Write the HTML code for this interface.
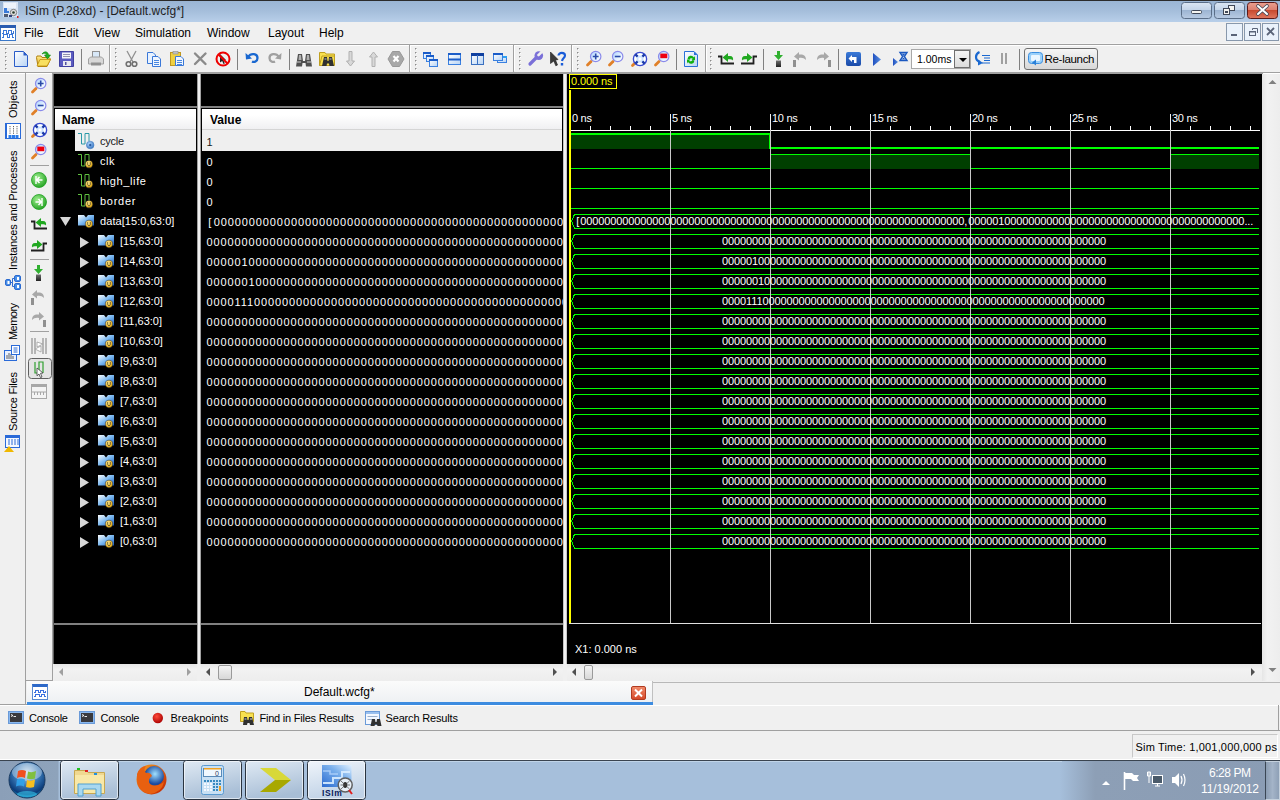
<!DOCTYPE html><html><head><meta charset="utf-8"><style>
html,body{margin:0;padding:0;width:1280px;height:800px;overflow:hidden;background:#f0f0f0;}
body{position:relative;font-family:"Liberation Sans",sans-serif;font-size:12px;color:#000;}
div{box-sizing:border-box;}
.t{position:absolute;white-space:nowrap;line-height:14px;}
svg{position:absolute;overflow:visible;}
</style></head><body>
<div style="position:absolute;left:0px;top:0px;width:1280px;height:22px;background:linear-gradient(#99b4d3,#a5bedb 50%,#b8cfe9);"></div>
<div style="position:absolute;left:0px;top:0px;width:1280px;height:1px;background:#2b2b2b;"></div>
<div class="t" style="left:25px;top:4px;font-size:12px;color:#1e1e1e;">ISim (P.28xd) - [Default.wcfg*]</div>
<svg width="1" height="1" style="left:0;top:0;"><rect x="3" y="2" width="15" height="15" fill="#d8e4f4"/><rect x="4" y="3" width="12" height="5" fill="#eef4fc"/><path d="M4 8 H7 V11 H9 V13 H4 Z" fill="#3a7ad8"/><circle cx="13.5" cy="12.5" r="3.2" fill="#e0e0e0" stroke="#808080" stroke-width="1"/><circle cx="13.5" cy="12.5" r="1.3" fill="#2a3a2a"/><rect x="4" y="14" width="4" height="3" fill="#505a70"/><rect x="9" y="15" width="3" height="2" fill="#30407a"/><rect x="17" y="16" width="1.5" height="2" fill="#e02020"/></svg>
<svg width="1" height="1" style="left:0;top:0;"><defs><linearGradient id="gWB" x1="0" y1="0" x2="0" y2="1"><stop offset="0" stop-color="#dbe6f3"/><stop offset="0.45" stop-color="#c4d5e9"/><stop offset="0.5" stop-color="#9db5d3"/><stop offset="1" stop-color="#b8cbe3"/></linearGradient><linearGradient id="gWC" x1="0" y1="0" x2="0" y2="1"><stop offset="0" stop-color="#eaa090"/><stop offset="0.45" stop-color="#dc8070"/><stop offset="0.5" stop-color="#c84a30"/><stop offset="1" stop-color="#e07860"/></linearGradient></defs><rect x="1181.5" y="2.5" width="30" height="16" rx="3" fill="url(#gWB)" stroke="#5a6e88"/><rect x="1214.5" y="2.5" width="30" height="16" rx="3" fill="url(#gWB)" stroke="#5a6e88"/><rect x="1247.5" y="2.5" width="30" height="16" rx="3" fill="url(#gWC)" stroke="#5a1a1a"/><rect x="1191.5" y="10.5" width="10" height="3" rx="1" fill="#f4f4f0" stroke="#404858"/><rect x="1228.5" y="5.5" width="6" height="5" fill="#f4f4f0" stroke="#404858"/><rect x="1223.5" y="8.5" width="6" height="6" fill="#f4f4f0" stroke="#404858"/><rect x="1225" y="11" width="3" height="2" fill="#404858"/><path d="M1258 6 L1267 14 M1267 6 L1258 14" stroke="#404858" stroke-width="3.6" stroke-linecap="round"/><path d="M1258 6 L1267 14 M1267 6 L1258 14" stroke="#ffffff" stroke-width="2" stroke-linecap="round"/></svg>
<div style="position:absolute;left:0px;top:22px;width:1280px;height:22px;background:#f0f0f0;"></div>
<div class="t" style="left:24px;top:26px;font-size:12px;">File</div>
<div class="t" style="left:58px;top:26px;font-size:12px;">Edit</div>
<div class="t" style="left:94px;top:26px;font-size:12px;">View</div>
<div class="t" style="left:135px;top:26px;font-size:12px;">Simulation</div>
<div class="t" style="left:207px;top:26px;font-size:12px;">Window</div>
<div class="t" style="left:268px;top:26px;font-size:12px;">Layout</div>
<div class="t" style="left:319px;top:26px;font-size:12px;">Help</div>
<div style="position:absolute;left:0px;top:43px;width:1280px;height:1px;background:#f5f5f5;"></div>
<svg width="1" height="1" style="left:0;top:0;"><rect x="0.5" y="25.5" width="15" height="15" fill="#fff" stroke="#3a78c8"/><rect x="0" y="25" width="16" height="3" fill="#2a5cb0"/><path d="M2 33.5 H3.5 V30.5 H6.5 V33.5 H8.5 V30.5 H11.5 V33.5 H13.5 V30.5 M2 37.5 H3.5 V34.5 H7.5 V37.5 H9.5 V34.5 H12.5 V37.5 H14" stroke="#3a78d8" fill="none" shape-rendering="crispEdges"/><rect x="1226.5" y="23.5" width="16" height="17" fill="#eaf2fb" stroke="#8898ac"/><rect x="1244.5" y="23.5" width="16" height="17" fill="#eaf2fb" stroke="#8898ac"/><rect x="1262.5" y="23.5" width="16" height="17" fill="#eaf2fb" stroke="#8898ac"/><rect x="1231" y="34" width="6" height="2" fill="#5a6478"/><rect x="1249.5" y="31.5" width="6" height="4" fill="none" stroke="#5a6478" stroke-width="1"/><rect x="1249" y="31" width="7" height="1.5" fill="#5a6478"/><path d="M1252.5 30 V28.5 H1257.5 V33" stroke="#5a6478" fill="none"/><path d="M1267 28 L1274 35 M1274 28 L1267 35" stroke="#5a6478" stroke-width="1.8"/></svg>
<div style="position:absolute;left:0px;top:44px;width:1280px;height:1px;background:#a0a0a0;"></div>
<div style="position:absolute;left:0px;top:45px;width:1280px;height:1px;background:#ffffff;"></div>
<div style="position:absolute;left:0px;top:46px;width:1280px;height:26px;background:#f0f0f0;"></div>
<div style="position:absolute;left:0px;top:72px;width:1280px;height:1px;background:#a0a0a0;"></div>
<div style="position:absolute;left:0px;top:73px;width:1280px;height:1px;background:#ffffff;"></div>
<div style="position:absolute;left:53px;top:73px;width:1210px;height:1px;background:#a0a0a0;"></div>
<svg width="1280" height="80" style="left:0;top:0;"><defs>
<linearGradient id="gPage" x1="0" y1="0" x2="1" y2="1"><stop offset="0" stop-color="#ffffff"/><stop offset="1" stop-color="#b8d4f4"/></linearGradient>
<linearGradient id="gFold" x1="0" y1="0" x2="0" y2="1"><stop offset="0" stop-color="#ffe98a"/><stop offset="1" stop-color="#e0b020"/></linearGradient>
<linearGradient id="gLens" x1="0" y1="0" x2="1" y2="1"><stop offset="0" stop-color="#a8d0ff"/><stop offset="0.6" stop-color="#e8f4ff"/><stop offset="1" stop-color="#ffffff"/></linearGradient>
<linearGradient id="gGray" x1="0" y1="0" x2="0" y2="1"><stop offset="0" stop-color="#e8e8e8"/><stop offset="1" stop-color="#a8a8a8"/></linearGradient>
<linearGradient id="gBlueBox" x1="0" y1="0" x2="0" y2="1"><stop offset="0" stop-color="#3a7ad8"/><stop offset="1" stop-color="#1a4aa8"/></linearGradient>
<linearGradient id="gPlay" x1="0" y1="0" x2="1" y2="0"><stop offset="0" stop-color="#2050c0"/><stop offset="1" stop-color="#5a90e0"/></linearGradient>
<linearGradient id="gBar" x1="0" y1="0" x2="0" y2="1"><stop offset="0" stop-color="#707070"/><stop offset="1" stop-color="#202020"/></linearGradient>
<linearGradient id="gBus" x1="0" y1="0" x2="1" y2="1"><stop offset="0" stop-color="#ffffff"/><stop offset="0.5" stop-color="#7ab8f0"/><stop offset="1" stop-color="#1a60c0"/></linearGradient>
<radialGradient id="gCoin" cx="0.4" cy="0.35" r="0.7"><stop offset="0" stop-color="#fff2a0"/><stop offset="1" stop-color="#d89a00"/></radialGradient>
<radialGradient id="gGreenC" cx="0.4" cy="0.35" r="0.7"><stop offset="0" stop-color="#a0f090"/><stop offset="1" stop-color="#20a020"/></radialGradient>
<radialGradient id="gBlueC" cx="0.4" cy="0.35" r="0.7"><stop offset="0" stop-color="#b0d8ff"/><stop offset="1" stop-color="#3070c0"/></radialGradient>
</defs><rect x="109" y="44" width="1" height="28" fill="#a0a0a0"/><rect x="110" y="45" width="1" height="26" fill="#ffffff"/><rect x="409" y="44" width="1" height="28" fill="#a0a0a0"/><rect x="410" y="45" width="1" height="26" fill="#ffffff"/><rect x="513" y="44" width="1" height="28" fill="#a0a0a0"/><rect x="514" y="45" width="1" height="26" fill="#ffffff"/><rect x="571" y="44" width="1" height="28" fill="#a0a0a0"/><rect x="572" y="45" width="1" height="26" fill="#ffffff"/><rect x="705" y="44" width="1" height="28" fill="#a0a0a0"/><rect x="706" y="45" width="1" height="26" fill="#ffffff"/><rect x="5" y="48" width="2" height="2" fill="#c4c4c4"/><rect x="5" y="48" width="1" height="1" fill="#8a8a8a"/><rect x="6" y="49" width="1" height="1" fill="#ffffff"/><rect x="5" y="52" width="2" height="2" fill="#c4c4c4"/><rect x="5" y="52" width="1" height="1" fill="#8a8a8a"/><rect x="6" y="53" width="1" height="1" fill="#ffffff"/><rect x="5" y="56" width="2" height="2" fill="#c4c4c4"/><rect x="5" y="56" width="1" height="1" fill="#8a8a8a"/><rect x="6" y="57" width="1" height="1" fill="#ffffff"/><rect x="5" y="60" width="2" height="2" fill="#c4c4c4"/><rect x="5" y="60" width="1" height="1" fill="#8a8a8a"/><rect x="6" y="61" width="1" height="1" fill="#ffffff"/><rect x="5" y="64" width="2" height="2" fill="#c4c4c4"/><rect x="5" y="64" width="1" height="1" fill="#8a8a8a"/><rect x="6" y="65" width="1" height="1" fill="#ffffff"/><rect x="5" y="68" width="2" height="2" fill="#c4c4c4"/><rect x="5" y="68" width="1" height="1" fill="#8a8a8a"/><rect x="6" y="69" width="1" height="1" fill="#ffffff"/><rect x="115" y="48" width="2" height="2" fill="#c4c4c4"/><rect x="115" y="48" width="1" height="1" fill="#8a8a8a"/><rect x="116" y="49" width="1" height="1" fill="#ffffff"/><rect x="115" y="52" width="2" height="2" fill="#c4c4c4"/><rect x="115" y="52" width="1" height="1" fill="#8a8a8a"/><rect x="116" y="53" width="1" height="1" fill="#ffffff"/><rect x="115" y="56" width="2" height="2" fill="#c4c4c4"/><rect x="115" y="56" width="1" height="1" fill="#8a8a8a"/><rect x="116" y="57" width="1" height="1" fill="#ffffff"/><rect x="115" y="60" width="2" height="2" fill="#c4c4c4"/><rect x="115" y="60" width="1" height="1" fill="#8a8a8a"/><rect x="116" y="61" width="1" height="1" fill="#ffffff"/><rect x="115" y="64" width="2" height="2" fill="#c4c4c4"/><rect x="115" y="64" width="1" height="1" fill="#8a8a8a"/><rect x="116" y="65" width="1" height="1" fill="#ffffff"/><rect x="115" y="68" width="2" height="2" fill="#c4c4c4"/><rect x="115" y="68" width="1" height="1" fill="#8a8a8a"/><rect x="116" y="69" width="1" height="1" fill="#ffffff"/><rect x="415" y="48" width="2" height="2" fill="#c4c4c4"/><rect x="415" y="48" width="1" height="1" fill="#8a8a8a"/><rect x="416" y="49" width="1" height="1" fill="#ffffff"/><rect x="415" y="52" width="2" height="2" fill="#c4c4c4"/><rect x="415" y="52" width="1" height="1" fill="#8a8a8a"/><rect x="416" y="53" width="1" height="1" fill="#ffffff"/><rect x="415" y="56" width="2" height="2" fill="#c4c4c4"/><rect x="415" y="56" width="1" height="1" fill="#8a8a8a"/><rect x="416" y="57" width="1" height="1" fill="#ffffff"/><rect x="415" y="60" width="2" height="2" fill="#c4c4c4"/><rect x="415" y="60" width="1" height="1" fill="#8a8a8a"/><rect x="416" y="61" width="1" height="1" fill="#ffffff"/><rect x="415" y="64" width="2" height="2" fill="#c4c4c4"/><rect x="415" y="64" width="1" height="1" fill="#8a8a8a"/><rect x="416" y="65" width="1" height="1" fill="#ffffff"/><rect x="415" y="68" width="2" height="2" fill="#c4c4c4"/><rect x="415" y="68" width="1" height="1" fill="#8a8a8a"/><rect x="416" y="69" width="1" height="1" fill="#ffffff"/><rect x="519" y="48" width="2" height="2" fill="#c4c4c4"/><rect x="519" y="48" width="1" height="1" fill="#8a8a8a"/><rect x="520" y="49" width="1" height="1" fill="#ffffff"/><rect x="519" y="52" width="2" height="2" fill="#c4c4c4"/><rect x="519" y="52" width="1" height="1" fill="#8a8a8a"/><rect x="520" y="53" width="1" height="1" fill="#ffffff"/><rect x="519" y="56" width="2" height="2" fill="#c4c4c4"/><rect x="519" y="56" width="1" height="1" fill="#8a8a8a"/><rect x="520" y="57" width="1" height="1" fill="#ffffff"/><rect x="519" y="60" width="2" height="2" fill="#c4c4c4"/><rect x="519" y="60" width="1" height="1" fill="#8a8a8a"/><rect x="520" y="61" width="1" height="1" fill="#ffffff"/><rect x="519" y="64" width="2" height="2" fill="#c4c4c4"/><rect x="519" y="64" width="1" height="1" fill="#8a8a8a"/><rect x="520" y="65" width="1" height="1" fill="#ffffff"/><rect x="519" y="68" width="2" height="2" fill="#c4c4c4"/><rect x="519" y="68" width="1" height="1" fill="#8a8a8a"/><rect x="520" y="69" width="1" height="1" fill="#ffffff"/><rect x="577" y="48" width="2" height="2" fill="#c4c4c4"/><rect x="577" y="48" width="1" height="1" fill="#8a8a8a"/><rect x="578" y="49" width="1" height="1" fill="#ffffff"/><rect x="577" y="52" width="2" height="2" fill="#c4c4c4"/><rect x="577" y="52" width="1" height="1" fill="#8a8a8a"/><rect x="578" y="53" width="1" height="1" fill="#ffffff"/><rect x="577" y="56" width="2" height="2" fill="#c4c4c4"/><rect x="577" y="56" width="1" height="1" fill="#8a8a8a"/><rect x="578" y="57" width="1" height="1" fill="#ffffff"/><rect x="577" y="60" width="2" height="2" fill="#c4c4c4"/><rect x="577" y="60" width="1" height="1" fill="#8a8a8a"/><rect x="578" y="61" width="1" height="1" fill="#ffffff"/><rect x="577" y="64" width="2" height="2" fill="#c4c4c4"/><rect x="577" y="64" width="1" height="1" fill="#8a8a8a"/><rect x="578" y="65" width="1" height="1" fill="#ffffff"/><rect x="577" y="68" width="2" height="2" fill="#c4c4c4"/><rect x="577" y="68" width="1" height="1" fill="#8a8a8a"/><rect x="578" y="69" width="1" height="1" fill="#ffffff"/><rect x="710" y="48" width="2" height="2" fill="#c4c4c4"/><rect x="710" y="48" width="1" height="1" fill="#8a8a8a"/><rect x="711" y="49" width="1" height="1" fill="#ffffff"/><rect x="710" y="52" width="2" height="2" fill="#c4c4c4"/><rect x="710" y="52" width="1" height="1" fill="#8a8a8a"/><rect x="711" y="53" width="1" height="1" fill="#ffffff"/><rect x="710" y="56" width="2" height="2" fill="#c4c4c4"/><rect x="710" y="56" width="1" height="1" fill="#8a8a8a"/><rect x="711" y="57" width="1" height="1" fill="#ffffff"/><rect x="710" y="60" width="2" height="2" fill="#c4c4c4"/><rect x="710" y="60" width="1" height="1" fill="#8a8a8a"/><rect x="711" y="61" width="1" height="1" fill="#ffffff"/><rect x="710" y="64" width="2" height="2" fill="#c4c4c4"/><rect x="710" y="64" width="1" height="1" fill="#8a8a8a"/><rect x="711" y="65" width="1" height="1" fill="#ffffff"/><rect x="710" y="68" width="2" height="2" fill="#c4c4c4"/><rect x="710" y="68" width="1" height="1" fill="#8a8a8a"/><rect x="711" y="69" width="1" height="1" fill="#ffffff"/><rect x="81" y="49" width="1" height="21" fill="#808080"/><rect x="237" y="49" width="1" height="21" fill="#808080"/><rect x="289" y="49" width="1" height="21" fill="#808080"/><rect x="676" y="49" width="1" height="21" fill="#808080"/><rect x="763" y="49" width="1" height="21" fill="#808080"/><rect x="838" y="49" width="1" height="21" fill="#808080"/><rect x="1019" y="49" width="1" height="21" fill="#808080"/><g transform="translate(14,51)"><path d="M0.5 0.5 H9.5 L13.5 4.5 V15.5 H0.5 Z" fill="url(#gPage)" stroke="#2a5cc8" stroke-width="1"/><path d="M9.5 0.5 V4.5 H13.5 Z" fill="#2a5cc8"/></g><g transform="translate(36,51)"><path d="M0.5 6.5 L2 15.5 H11 L14.5 8 L13 6.5 H6 L5 5 H1 Z" fill="url(#gFold)" stroke="#b08010" stroke-width="1"/><path d="M1 15 L4 8.5 H14.5 L11 15 Z" fill="#f8e060" stroke="#c09010" stroke-width="0.8"/><path d="M6 3 C8 0 12 0 12.5 4 L14.5 4 L11.5 8 L8.5 4 L10.5 4 C10 2 8 2 6 3 Z" fill="#20b020" stroke="#108010" stroke-width="0.6"/></g><g transform="translate(59,51)"><path d="M0.5 0.5 H14.5 V15.5 H0.5 Z" fill="#5a5ac0" stroke="#4040a0" stroke-width="1"/><rect x="3" y="1.5" width="9" height="6" fill="#f4f4f8"/><path d="M4 3.5 H11 M4 5.5 H11" stroke="#9090b0" stroke-width="1"/><rect x="4" y="10" width="8" height="5" fill="#e8e8f0"/><rect x="6" y="11" width="1.5" height="3" fill="#5050a0"/></g><g transform="translate(88,51)"><rect x="4.5" y="0.5" width="7" height="6" fill="#d8e8f8" stroke="#909090"/><path d="M0.5 8 L2.5 6 H13.5 L15.5 8 V13 H0.5 Z" fill="#d8d8d8" stroke="#a0a0a0"/><rect x="3" y="11.5" width="10" height="3" fill="#909090"/></g><g transform="translate(124,51)"><path d="M3 0 L9 11 M12 0 L6 11" stroke="#909090" stroke-width="1.3" fill="none"/><circle cx="4.5" cy="13" r="2.3" fill="none" stroke="#707070" stroke-width="1.6"/><circle cx="10.5" cy="13" r="2.3" fill="none" stroke="#707070" stroke-width="1.6"/></g><g transform="translate(147,52)"><path d="M0.5 0.5 H6 L8.5 3 V11.5 H0.5 Z" fill="#e8f2ff" stroke="#3a78d8"/><path d="M5.5 4.5 H11 L13.5 7 V14.5 H5.5 Z" fill="#f0f6ff" stroke="#3a78d8"/><path d="M7 8.5 H12 M7 10.5 H12 M7 12.5 H12" stroke="#4a88e0"/></g><g transform="translate(170,51)"><rect x="0.5" y="1.5" width="10" height="13" fill="#f0d040" stroke="#c09820"/><rect x="3" y="0.5" width="5" height="2.5" fill="#c0c0c0" stroke="#909090" stroke-width="0.6"/><path d="M5.5 5.5 H11 L13.5 8 V14.5 H5.5 Z" fill="#f0f6ff" stroke="#3a78d8"/><path d="M7 9.5 H12 M7 11.5 H12 M7 13.5 H12" stroke="#4a88e0"/></g><g transform="translate(193,51)"><path d="M2 2.5 L12.5 13 M12.5 2.5 L2 13" stroke="#8a8a8a" stroke-width="2.4" stroke-linecap="round"/></g><g transform="translate(215,51)"><path d="M5 3 L11 9 L8.5 9.3 L9.8 12.5 L8.5 13 L7.2 9.9 L5 11.5 Z" fill="#222"/><circle cx="8" cy="8" r="6.5" fill="none" stroke="#ee0000" stroke-width="2"/><path d="M3.5 3.5 L12.5 12.5" stroke="#ee0000" stroke-width="2"/></g><g transform="translate(245,51)"><path d="M3 6 C6 1.5 12.5 2.5 12.5 7 C12.5 10.5 9 11.5 7 10.5" stroke="#1a68d0" stroke-width="2.3" fill="none"/><path d="M0.5 2 L1 8.5 L7 7.5 Z" fill="#1a68d0"/></g><g transform="translate(268,51)"><path d="M11 6 C8 1.5 1.5 2.5 1.5 7 C1.5 10.5 5 11.5 7 10.5" stroke="#a0a0a0" stroke-width="2.3" fill="none"/><path d="M13.5 2 L13 8.5 L7 7.5 Z" fill="#a0a0a0"/></g><g transform="translate(296,52)"><path d="M2 2 H6 L7 9 H9 L10 2 H14 L16 14.5 H10 L9.5 11 H6.5 L6 14.5 H0 Z" fill="#505050"/><path d="M3 3 H5 L5.5 8 H2.5 Z M11 3 H13 L13.5 8 H10.5 Z" fill="#b0b0b0"/><path d="M1 10 H5 M11 10 H15" stroke="#d0d0d0" stroke-width="1"/></g><g transform="translate(319,51)"><path d="M0.5 1.5 H6 L7 3 H15.5 V14.5 H0.5 Z" fill="#f8e050" stroke="#c0a020"/><path d="M0.5 14.5 L3 5 H15.5" fill="none" stroke="#c0a020"/><path d="M5 6 H8 L8.5 10 H9.5 L10 6 H13 L15 15 H10.5 L10 12.5 H8 L7.5 15 H3 Z" fill="#303030"/><path d="M5.5 8 H7.5 M10.5 8 H12.5" stroke="#c0c0c0"/></g><g transform="translate(346,51)"><path d="M3 0.5 H6 V10 H8.5 L4.5 15 L0.5 10 H3 Z" fill="#d8d8d8" stroke="#b0b0b0"/></g><g transform="translate(369,51)"><path d="M3 15.5 H6 V6 H8.5 L4.5 1 L0.5 6 H3 Z" fill="#d8d8d8" stroke="#b0b0b0"/></g><g transform="translate(388,51)"><path d="M4.5 0.5 H11.5 L16 8 L11.5 15.5 H4.5 L0 8 Z" fill="#a8a8a8" stroke="#989898"/><path d="M5.5 5 L10.5 10.5 M10.5 5 L5.5 10.5" stroke="#fff" stroke-width="2.2"/></g><g transform="translate(423,51)"><rect x="0.5" y="1.5" width="7" height="6" fill="url(#gPage)" stroke="#3a80e0"/><rect x="0" y="1" width="8" height="2" fill="#1a5cc8"/><rect x="3.5" y="4.5" width="7" height="6" fill="url(#gPage)" stroke="#3a80e0"/><rect x="3" y="4" width="8" height="2" fill="#1a5cc8"/><rect x="6.5" y="8.5" width="8" height="7" fill="url(#gPage)" stroke="#3a80e0"/><rect x="6" y="8" width="9" height="2" fill="#1a5cc8"/></g><g transform="translate(448,51)"><rect x="0.5" y="2.5" width="12" height="11" fill="url(#gPage)" stroke="#3a80e0"/><rect x="0" y="2" width="13" height="2" fill="#1a5cc8"/><rect x="0" y="7.5" width="13" height="2" fill="#1a5cc8"/></g><g transform="translate(471,51)"><rect x="0.5" y="2.5" width="12" height="11" fill="url(#gPage)" stroke="#3a70c0"/><rect x="0" y="2" width="13" height="3" fill="#1040a0"/><path d="M6.5 4 V13" stroke="#3a70c0"/></g><g transform="translate(493,51)"><rect x="4.5" y="5.5" width="9" height="6" fill="url(#gPage)" stroke="#3a80e0"/><rect x="4" y="5" width="10" height="2" fill="#30a0f0"/><rect x="0.5" y="2.5" width="9" height="7" fill="url(#gPage)" stroke="#3a80e0"/><rect x="0" y="2" width="10" height="2" fill="#1a5cc8"/></g><g transform="translate(528,51)"><path d="M2 13 L8.5 6.5" stroke="#7a70d8" stroke-width="3.2" stroke-linecap="round"/><circle cx="10.8" cy="4.6" r="4.3" fill="#7a70d8"/><path d="M10.5 4.2 L14 0.7" stroke="#f0f0f0" stroke-width="2.6" stroke-linecap="round"/></g><g transform="translate(550,51)"><path d="M0.5 1 L8 8.5 L5.5 9 L7.5 14 L5.8 14.8 L3.8 10 L0.5 12.5 Z" fill="#3a3a3a" stroke="#1a1a1a" stroke-width="0.6"/><path d="M8.5 4.5 C8.5 1 15 1 15 4.5 C15 7 12.5 7 12 10" stroke="#1a5cd8" stroke-width="2.1" fill="none"/><rect x="10.8" y="12" width="2.4" height="2.5" fill="#1a5cd8"/></g><g transform="translate(586,51)"><path d="M1.5 14 L5 10.5" stroke="#e08028" stroke-width="2.8" stroke-linecap="round"/><circle cx="9.7" cy="5.5" r="5.2" fill="url(#gLens)" stroke="#8a8aea" stroke-width="1.2"/><path d="M6.8 5.5 H12.6 M9.7 2.6 V8.6" stroke="#2a4aa8" stroke-width="1.6"/></g><g transform="translate(608,51)"><path d="M1.5 14 L5 10.5" stroke="#e08028" stroke-width="2.8" stroke-linecap="round"/><circle cx="9.7" cy="5.5" r="5.2" fill="url(#gLens)" stroke="#8a8aea" stroke-width="1.2"/><path d="M6.8 5.5 H12.6" stroke="#2a4aa8" stroke-width="1.6"/></g><g transform="translate(631,51)"><path d="M1.5 14.5 L3.8 12.2" stroke="#e08028" stroke-width="2.8" stroke-linecap="round"/><circle cx="9" cy="8" r="6.6" fill="#c8e0ff" stroke="#3a4ad0" stroke-width="1.4"/><circle cx="9" cy="8" r="4.6" fill="none" stroke="#ffffff" stroke-width="2.2"/><path d="M4.4 3.4 L6.6 5.6 M13.6 3.4 L11.4 5.6 M4.4 12.6 L6.6 10.4 M13.6 12.6 L11.4 10.4" stroke="#1a3aa8" stroke-width="2.4"/><rect x="7.5" y="6.5" width="3" height="3" fill="#ffffff"/></g><g transform="translate(654,51)"><path d="M1.5 14 L5 10.5" stroke="#e08028" stroke-width="2.8" stroke-linecap="round"/><circle cx="9.7" cy="5.5" r="5.2" fill="url(#gLens)" stroke="#8a8aea" stroke-width="1.2"/><rect x="6.3" y="2.6" width="7" height="4.6" fill="#ee0010"/></g><g transform="translate(684,51)"><path d="M0.5 0.5 H10 L13.5 4 V15.5 H0.5 Z" fill="url(#gPage)" stroke="#2a70d8"/><path d="M10 0.5 V4 H13.5" fill="#2a70d8"/><path d="M3.5 8 A3.5 3.5 0 0 1 10 6.5 L11 5 V9 H7.5 L8.8 7.8 A2 2 0 0 0 5.5 8.5 Z" fill="#10b010"/><path d="M10.5 9.5 A3.5 3.5 0 0 1 4 11 L3 12.5 V8.5 H6.5 L5.2 9.7 A2 2 0 0 0 8.5 9 Z" fill="#10b010"/></g><g transform="translate(718,53)"><path d="M0 3.5 H3.5 V10.5 H16" stroke="#202020" stroke-width="1.8" fill="none"/><path d="M4.5 4.5 L10 0 V3 H12 C14.5 3 15.5 5 15 7.5 C14 6.5 13 6.3 11 6.3 H10 V9 Z" fill="#20a820"/></g><g transform="translate(741,53)"><path d="M16 3.5 H12.5 V10.5 H0" stroke="#202020" stroke-width="1.8" fill="none"/><path d="M11.5 4.5 L6 0 V3 H4 C1.5 3 0.5 5 1 7.5 C2 6.5 3 6.3 5 6.3 H6 V9 Z" fill="#20a820"/></g><g transform="translate(774,51)"><path d="M3 0 H6 V4 H9 L4.5 9 L0 4 H3 Z" fill="#30b030"/><rect x="2" y="9.5" width="5" height="6.5" fill="url(#gBar)"/></g><g transform="translate(793,51)"><rect x="0" y="9" width="3" height="7" fill="#909090"/><path d="M3 9 C3 4 6 3 10 3.5 V1 L15 5.5 L10 9.5 V7 C7 6.5 5 7 3 9 Z" fill="#a8a8a8" transform="translate(16,0) scale(-1,1)"/></g><g transform="translate(816,51)"><rect x="12" y="9" width="3" height="7" fill="#909090"/><path d="M1 9 C1 4 4 3 8 3.5 V1 L13 5.5 L8 9.5 V7 C5 6.5 3 7 1 9 Z" fill="#a8a8a8"/></g><g transform="translate(846,52)"><rect x="0" y="0" width="15" height="14" rx="2" fill="url(#gBlueBox)"/><path d="M2.5 6.5 L6 3 V5 H10.5 V11 H8 V8 H6 V10 Z" fill="#ffffff"/></g><g transform="translate(873,53)"><path d="M0 0 L8 6.5 L0 13 Z" fill="url(#gPlay)"/></g><g transform="translate(893,52)"><path d="M0 6 L5 10 L0 14 Z" fill="url(#gPlay)"/><path d="M7 0.5 H14 L11.3 4.5 L14 8.5 H7 L9.7 4.5 Z" fill="#fff" stroke="#1a58c0" stroke-width="1.4"/><path d="M8.5 1.5 H12.5 L10.5 4 Z M10.5 5.5 L12.5 7.5 H8.5 Z" fill="#1a58c0"/></g><g transform="translate(975,51)"><path d="M4.5 1 C0 3 -0.5 9 5 11" stroke="#1a68d0" stroke-width="2.2" fill="none"/><path d="M3 8.5 L8 12 L3 14.5 Z" fill="#1a68d0"/><path d="M7 4.5 H15 M9 7 H15 M9 9.5 H15 M7 12 H15" stroke="#1a68d0" stroke-width="1.2"/></g><g transform="translate(1000,51)"><rect x="1" y="2" width="2" height="11" fill="#a0a0a0"/><rect x="5" y="2" width="2" height="11" fill="#a0a0a0"/></g></svg>
<div style="position:absolute;left:911px;top:49px;width:60px;height:20px;background:#fff;border:1px solid #a8a8a8;"></div>
<div style="position:absolute;left:954px;top:50px;width:16px;height:18px;background:linear-gradient(#f4f4f4,#dcdcdc);border:1px solid #707070;"></div>
<svg width="1" height="1" style="left:0;top:0;"><path d="M959 58 H967 L963 62 Z" fill="#000"/></svg>
<div class="t" style="left:917px;top:52px;font-size:10.5px;">1.00ms</div>
<div style="position:absolute;left:1024px;top:48px;width:74px;height:22px;background:linear-gradient(#f6f6f6,#e4e4e4 60%,#d8d8d8);border:1px solid #707070;border-radius:3px;"></div>
<svg width="1" height="1" style="left:0;top:0;"><g transform="translate(1028,52)"><rect x="0.5" y="0.5" width="14" height="11" rx="3" fill="#9ad0fa" stroke="#3a8ee0"/><rect x="3" y="3" width="9" height="6" rx="1" fill="#eaf6ff"/><path d="M4 10.5 L8 7.5 V13.5 Z" fill="#2a80d8"/></g></svg>
<div class="t" style="left:1044.5px;top:52px;font-size:11.5px;letter-spacing:-0.301px;">Re-launch</div>
<div style="position:absolute;left:0px;top:74px;width:25px;height:631px;background:#f0f0f0;"></div>
<div style="position:absolute;left:25px;top:73px;width:1px;height:632px;background:#a0a0a0;"></div>
<div style="position:absolute;left:26px;top:74px;width:26px;height:606px;background:#f0f0f0;"></div>
<div style="position:absolute;left:52px;top:73px;width:1px;height:608px;background:#a0a0a0;"></div>
<div style="position:absolute;left:26px;top:680px;width:27px;height:1px;background:#a0a0a0;"></div>
<div style="position:absolute;left:0px;top:704px;width:27px;height:1px;background:#a0a0a0;"></div>
<div class="t" style="left:6.19px;top:118px;font-size:11px;letter-spacing:0.031px;transform:rotate(-90deg);transform-origin:0 0;">Objects</div>
<div class="t" style="left:6.19px;top:270px;font-size:11px;letter-spacing:-0.159px;transform:rotate(-90deg);transform-origin:0 0;">Instances and Processes</div>
<div class="t" style="left:6.19px;top:340px;font-size:11px;letter-spacing:-0.544px;transform:rotate(-90deg);transform-origin:0 0;">Memory</div>
<div class="t" style="left:6.19px;top:431px;font-size:11px;letter-spacing:-0.196px;transform:rotate(-90deg);transform-origin:0 0;">Source Files</div>
<svg width="1" height="1" style="left:0;top:0;"><g transform="translate(5,123)"><rect x="0.5" y="0.5" width="15" height="15" fill="#fff" stroke="#2a6ad8"/><rect x="0" y="0" width="2" height="16" fill="#2a6ad8"/><path d="M5 3 V11 M8.5 3 V11 M12 3 V11" stroke="#606060" stroke-dasharray="1.2 1"/><path d="M3.5 15 V12 H6.5 V15 M7 15 V12 H10 V15 M10.5 15 V12 H13.5 V15" fill="#2a7ae8"/></g><g transform="translate(5,275)"><rect x="0.5" y="4.5" width="5" height="6" rx="1.5" fill="#4a90e8" stroke="#2a6ad0"/><rect x="9.5" y="0.5" width="6" height="6" rx="1.5" fill="#4a90e8" stroke="#2a6ad0"/><rect x="9.5" y="8.5" width="6" height="6" rx="1.5" fill="#4a90e8" stroke="#2a6ad0"/><rect x="2.5" y="6" width="2" height="3" fill="#fff"/><rect x="12" y="2" width="2" height="3" fill="#fff"/><rect x="12" y="10" width="2" height="3" fill="#fff"/><path d="M5.5 7.5 H7.5 V3.5 H9.5 M7.5 7.5 V11.5 H9.5" stroke="#2a6ad0" fill="none"/></g><g transform="translate(4,345)"><rect x="0.5" y="5.5" width="12" height="10" fill="#e8f0ff" stroke="#2a6ad8"/><path d="M3 14 V10 M5 14 V8 M7 14 V9 M9 14 V11" stroke="#606060" stroke-width="1"/><rect x="7.5" y="0.5" width="8" height="9" fill="#fff" stroke="#2a6ad8"/><path d="M9.5 3 H13.5 M9.5 5 H13.5 M9.5 7 H13.5" stroke="#2a6ad8"/></g><g transform="translate(4,435)"><rect x="1.5" y="0.5" width="14" height="12" fill="#f4f8ff" stroke="#2a6ad8"/><rect x="1" y="0" width="15" height="3" fill="#2a6ad8"/><path d="M5 4 V10 M8 4 V10 M11 4 V10 M14 4 V10" stroke="#2a6ad8"/><path d="M0 17 L5 11 L10 17 Z" fill="#f0b800"/></g><g transform="translate(31,78)"><path d="M1.5 14 L5 10.5" stroke="#e08028" stroke-width="2.8" stroke-linecap="round"/><circle cx="9.7" cy="5.5" r="5.2" fill="url(#gLens)" stroke="#8a8aea" stroke-width="1.2"/><path d="M6.8 5.5 H12.6 M9.7 2.6 V8.6" stroke="#2a4aa8" stroke-width="1.6"/></g><g transform="translate(31,100)"><path d="M1.5 14 L5 10.5" stroke="#e08028" stroke-width="2.8" stroke-linecap="round"/><circle cx="9.7" cy="5.5" r="5.2" fill="url(#gLens)" stroke="#8a8aea" stroke-width="1.2"/><path d="M6.8 5.5 H12.6" stroke="#2a4aa8" stroke-width="1.6"/></g><g transform="translate(31,122)"><path d="M1.5 14.5 L3.8 12.2" stroke="#e08028" stroke-width="2.8" stroke-linecap="round"/><circle cx="9" cy="8" r="6.6" fill="#c8e0ff" stroke="#3a4ad0" stroke-width="1.4"/><circle cx="9" cy="8" r="4.6" fill="none" stroke="#ffffff" stroke-width="2.2"/><path d="M4.4 3.4 L6.6 5.6 M13.6 3.4 L11.4 5.6 M4.4 12.6 L6.6 10.4 M13.6 12.6 L11.4 10.4" stroke="#1a3aa8" stroke-width="2.4"/><rect x="7.5" y="6.5" width="3" height="3" fill="#ffffff"/></g><g transform="translate(31,144)"><path d="M1.5 14 L5 10.5" stroke="#e08028" stroke-width="2.8" stroke-linecap="round"/><circle cx="9.7" cy="5.5" r="5.2" fill="url(#gLens)" stroke="#8a8aea" stroke-width="1.2"/><rect x="6.3" y="2.6" width="7" height="4.6" fill="#ee0010"/></g><g transform="translate(31,172)"><circle cx="8" cy="8" r="7.5" fill="url(#gGreenC)" stroke="#20a020" stroke-width="0.8"/><path d="M5 4 V12 M11.5 8 H6 M8.5 5 L5.8 8 L8.5 11" stroke="#fff" stroke-width="1.4" fill="none"/></g><g transform="translate(31,194)"><circle cx="8" cy="8" r="7.5" fill="url(#gGreenC)" stroke="#20a020" stroke-width="0.8"/><path d="M11 4 V12 M4.5 8 H10 M7.5 5 L10.2 8 L7.5 11" stroke="#fff" stroke-width="1.4" fill="none"/></g><g transform="translate(31,218)"><path d="M0 3.5 H3.5 V10.5 H16" stroke="#202020" stroke-width="1.8" fill="none"/><path d="M4.5 4.5 L10 0 V3 H12 C14.5 3 15.5 5 15 7.5 C14 6.5 13 6.3 11 6.3 H10 V9 Z" fill="#20a820"/></g><g transform="translate(31,240)"><path d="M16 3.5 H12.5 V10.5 H0" stroke="#202020" stroke-width="1.8" fill="none"/><path d="M11.5 4.5 L6 0 V3 H4 C1.5 3 0.5 5 1 7.5 C2 6.5 3 6.3 5 6.3 H6 V9 Z" fill="#20a820"/></g><g transform="translate(34,265)"><path d="M3 0 H6 V4 H9 L4.5 9 L0 4 H3 Z" fill="#30b030"/><rect x="2" y="9.5" width="5" height="6.5" fill="url(#gBar)"/></g><g transform="translate(31,289)"><rect x="0" y="9" width="3" height="7" fill="#909090"/><path d="M3 9 C3 4 6 3 10 3.5 V1 L15 5.5 L10 9.5 V7 C7 6.5 5 7 3 9 Z" fill="#a8a8a8" transform="translate(16,0) scale(-1,1)"/></g><g transform="translate(31,311)"><rect x="12" y="9" width="3" height="7" fill="#909090"/><path d="M1 9 C1 4 4 3 8 3.5 V1 L13 5.5 L8 9.5 V7 C5 6.5 3 7 1 9 Z" fill="#a8a8a8"/></g><g transform="translate(31,338)"><path d="M1 0 V16 M4 0 V16 M12 0 V16 M15 0 V16" stroke="#a8a8a8" stroke-width="1.6"/><path d="M6 4 L12 6 L6 9 Z M10 8 L4 11 L10 14 Z" fill="#fff" stroke="#a0a0a0" stroke-width="0.8"/></g><g transform="translate(28,358)"><rect x="0.5" y="0.5" width="23" height="20" rx="3" fill="#e4e4e4" stroke="#606060"/><path d="M7 4 V15 H11 V4 H15 V15" stroke="#30a030" stroke-width="1.2" fill="none"/><path d="M9 10 L15 15 L12.5 15.3 L14 19 L12.5 19.6 L11 16 L9 17.8 Z" fill="#fff" stroke="#404040" stroke-width="0.8"/></g><g transform="translate(31,384)"><rect x="0.5" y="0.5" width="15" height="14" fill="#f4f4f4" stroke="#a8a8a8"/><rect x="0" y="0" width="16" height="3" fill="#a8a8a8"/><path d="M0.5 8 H15.5 M3.5 8 V11 M6.5 8 V11 M9.5 8 V11 M12.5 8 V11" stroke="#a8a8a8"/></g><rect x="30" y="165" width="19" height="1" fill="#a0a0a0"/><rect x="30" y="259" width="19" height="1" fill="#a0a0a0"/><rect x="30" y="331" width="19" height="1" fill="#a0a0a0"/></svg>
<div style="position:absolute;left:53px;top:74px;width:1209px;height:590px;background:#000;"></div>
<div style="position:absolute;left:197px;top:74px;width:4px;height:590px;background:#a0a0a0;"></div>
<div style="position:absolute;left:198px;top:74px;width:2px;height:590px;background:#f0f0f0;"></div>
<div style="position:absolute;left:563px;top:74px;width:4px;height:590px;background:linear-gradient(90deg,#a8a8a8,#f4f4f4 35%,#f0f0f0 65%,#b0b0b0);"></div>
<div style="position:absolute;left:53px;top:74px;width:1px;height:590px;background:#606060;"></div>
<div style="position:absolute;left:54px;top:106px;width:143px;height:2px;background:#808080;"></div>
<div style="position:absolute;left:201px;top:106px;width:362px;height:2px;background:#808080;"></div>
<div style="position:absolute;left:54px;top:623px;width:143px;height:2px;background:#808080;"></div>
<div style="position:absolute;left:201px;top:623px;width:362px;height:2px;background:#808080;"></div>
<div style="position:absolute;left:55px;top:109px;width:141px;height:21px;background:linear-gradient(#ffffff,#ffffff 30%,#f0f0f2);border-bottom:1px solid #d5d5d5;"></div>
<div style="position:absolute;left:202px;top:109px;width:360px;height:21px;background:linear-gradient(#ffffff,#ffffff 30%,#f0f0f2);border-bottom:1px solid #d5d5d5;"></div>
<div class="t" style="left:62px;top:113px;font-size:12px;color:#000;"><b>Name</b></div>
<div class="t" style="left:210px;top:113px;font-size:12px;color:#000;"><b>Value</b></div>
<div style="position:absolute;left:75px;top:130px;width:121px;height:21px;background:#efefef;"></div>
<div style="position:absolute;left:202px;top:130px;width:360px;height:21px;background:#efefef;"></div>
<div class="t" style="left:100px;top:134px;font-size:11px;letter-spacing:-0.266px;color:#1a1a1a;">cycle</div>
<div style="position:absolute;left:201px;top:131px;width:362px;height:20px;overflow:hidden;"><div class="t" style="left:5.6px;top:4px;color:#1a1a1a;font-size:11px;letter-spacing:0.884px;">1</div></div>
<div class="t" style="left:100px;top:154px;font-size:11px;letter-spacing:0.531px;color:#ffffff;">clk</div>
<div style="position:absolute;left:201px;top:151px;width:362px;height:20px;overflow:hidden;"><div class="t" style="left:5.6px;top:4px;color:#ffffff;font-size:11px;letter-spacing:0.884px;">0</div></div>
<div class="t" style="left:100px;top:174px;font-size:11px;letter-spacing:0.625px;color:#ffffff;">high_life</div>
<div style="position:absolute;left:201px;top:171px;width:362px;height:20px;overflow:hidden;"><div class="t" style="left:5.6px;top:4px;color:#ffffff;font-size:11px;letter-spacing:0.884px;">0</div></div>
<div class="t" style="left:100px;top:194px;font-size:11px;letter-spacing:0.738px;color:#ffffff;">border</div>
<div style="position:absolute;left:201px;top:191px;width:362px;height:20px;overflow:hidden;"><div class="t" style="left:5.6px;top:4px;color:#ffffff;font-size:11px;letter-spacing:0.884px;">0</div></div>
<div class="t" style="left:100px;top:214px;font-size:11px;letter-spacing:0.071px;color:#ffffff;">data[15:0,63:0]</div>
<div style="position:absolute;left:201px;top:211px;width:362px;height:20px;overflow:hidden;"><div class="t" style="left:6.3px;top:4px;color:#ffffff;font-size:11px;letter-spacing:0.884px;"><span style="letter-spacing:2.5px;margin-left:1px">[</span>0000000000000000000000000000000000000000000000000000000000000000,0000010000000000000000000000000000000000000000000000000000000000,0000001000000000000000000000000000000000000000000000000000000000,0000111000000000000000000000000000000000000000000000000000000000,0000000000000000000000000000000000000000000000000000000000000000,0000000000000000000000000000000000000000000000000000000000000000,0000000000000000000000000000000000000000000000000000000000000000,0000000000000000000000000000000000000000000000000000000000000000,0000000000000000000000000000000000000000000000000000000000000000,0000000000000000000000000000000000000000000000000000000000000000,0000000000000000000000000000000000000000000000000000000000000000,0000000000000000000000000000000000000000000000000000000000000000,0000000000000000000000000000000000000000000000000000000000000000,0000000000000000000000000000000000000000000000000000000000000000,0000000000000000000000000000000000000000000000000000000000000000,0000000000000000000000000000000000000000000000000000000000000000]</div></div>
<div class="t" style="left:120px;top:234px;color:#ffffff;font-size:11px;">[15,63:0]</div>
<div style="position:absolute;left:201px;top:231px;width:362px;height:20px;overflow:hidden;"><div class="t" style="left:5.6px;top:4px;color:#ffffff;font-size:11px;letter-spacing:0.884px;">0000000000000000000000000000000000000000000000000000000000000000</div></div>
<div class="t" style="left:120px;top:254px;color:#ffffff;font-size:11px;">[14,63:0]</div>
<div style="position:absolute;left:201px;top:251px;width:362px;height:20px;overflow:hidden;"><div class="t" style="left:5.6px;top:4px;color:#ffffff;font-size:11px;letter-spacing:0.884px;">0000010000000000000000000000000000000000000000000000000000000000</div></div>
<div class="t" style="left:120px;top:274px;color:#ffffff;font-size:11px;">[13,63:0]</div>
<div style="position:absolute;left:201px;top:271px;width:362px;height:20px;overflow:hidden;"><div class="t" style="left:5.6px;top:4px;color:#ffffff;font-size:11px;letter-spacing:0.884px;">0000001000000000000000000000000000000000000000000000000000000000</div></div>
<div class="t" style="left:120px;top:294px;color:#ffffff;font-size:11px;">[12,63:0]</div>
<div style="position:absolute;left:201px;top:291px;width:362px;height:20px;overflow:hidden;"><div class="t" style="left:5.6px;top:4px;color:#ffffff;font-size:11px;letter-spacing:0.884px;">0000111000000000000000000000000000000000000000000000000000000000</div></div>
<div class="t" style="left:120px;top:314px;color:#ffffff;font-size:11px;">[11,63:0]</div>
<div style="position:absolute;left:201px;top:311px;width:362px;height:20px;overflow:hidden;"><div class="t" style="left:5.6px;top:4px;color:#ffffff;font-size:11px;letter-spacing:0.884px;">0000000000000000000000000000000000000000000000000000000000000000</div></div>
<div class="t" style="left:120px;top:334px;color:#ffffff;font-size:11px;">[10,63:0]</div>
<div style="position:absolute;left:201px;top:331px;width:362px;height:20px;overflow:hidden;"><div class="t" style="left:5.6px;top:4px;color:#ffffff;font-size:11px;letter-spacing:0.884px;">0000000000000000000000000000000000000000000000000000000000000000</div></div>
<div class="t" style="left:120px;top:354px;color:#ffffff;font-size:11px;">[9,63:0]</div>
<div style="position:absolute;left:201px;top:351px;width:362px;height:20px;overflow:hidden;"><div class="t" style="left:5.6px;top:4px;color:#ffffff;font-size:11px;letter-spacing:0.884px;">0000000000000000000000000000000000000000000000000000000000000000</div></div>
<div class="t" style="left:120px;top:374px;color:#ffffff;font-size:11px;">[8,63:0]</div>
<div style="position:absolute;left:201px;top:371px;width:362px;height:20px;overflow:hidden;"><div class="t" style="left:5.6px;top:4px;color:#ffffff;font-size:11px;letter-spacing:0.884px;">0000000000000000000000000000000000000000000000000000000000000000</div></div>
<div class="t" style="left:120px;top:394px;color:#ffffff;font-size:11px;">[7,63:0]</div>
<div style="position:absolute;left:201px;top:391px;width:362px;height:20px;overflow:hidden;"><div class="t" style="left:5.6px;top:4px;color:#ffffff;font-size:11px;letter-spacing:0.884px;">0000000000000000000000000000000000000000000000000000000000000000</div></div>
<div class="t" style="left:120px;top:414px;color:#ffffff;font-size:11px;">[6,63:0]</div>
<div style="position:absolute;left:201px;top:411px;width:362px;height:20px;overflow:hidden;"><div class="t" style="left:5.6px;top:4px;color:#ffffff;font-size:11px;letter-spacing:0.884px;">0000000000000000000000000000000000000000000000000000000000000000</div></div>
<div class="t" style="left:120px;top:434px;color:#ffffff;font-size:11px;">[5,63:0]</div>
<div style="position:absolute;left:201px;top:431px;width:362px;height:20px;overflow:hidden;"><div class="t" style="left:5.6px;top:4px;color:#ffffff;font-size:11px;letter-spacing:0.884px;">0000000000000000000000000000000000000000000000000000000000000000</div></div>
<div class="t" style="left:120px;top:454px;color:#ffffff;font-size:11px;">[4,63:0]</div>
<div style="position:absolute;left:201px;top:451px;width:362px;height:20px;overflow:hidden;"><div class="t" style="left:5.6px;top:4px;color:#ffffff;font-size:11px;letter-spacing:0.884px;">0000000000000000000000000000000000000000000000000000000000000000</div></div>
<div class="t" style="left:120px;top:474px;color:#ffffff;font-size:11px;">[3,63:0]</div>
<div style="position:absolute;left:201px;top:471px;width:362px;height:20px;overflow:hidden;"><div class="t" style="left:5.6px;top:4px;color:#ffffff;font-size:11px;letter-spacing:0.884px;">0000000000000000000000000000000000000000000000000000000000000000</div></div>
<div class="t" style="left:120px;top:494px;color:#ffffff;font-size:11px;">[2,63:0]</div>
<div style="position:absolute;left:201px;top:491px;width:362px;height:20px;overflow:hidden;"><div class="t" style="left:5.6px;top:4px;color:#ffffff;font-size:11px;letter-spacing:0.884px;">0000000000000000000000000000000000000000000000000000000000000000</div></div>
<div class="t" style="left:120px;top:514px;color:#ffffff;font-size:11px;">[1,63:0]</div>
<div style="position:absolute;left:201px;top:511px;width:362px;height:20px;overflow:hidden;"><div class="t" style="left:5.6px;top:4px;color:#ffffff;font-size:11px;letter-spacing:0.884px;">0000000000000000000000000000000000000000000000000000000000000000</div></div>
<div class="t" style="left:120px;top:534px;color:#ffffff;font-size:11px;">[0,63:0]</div>
<div style="position:absolute;left:201px;top:531px;width:362px;height:20px;overflow:hidden;"><div class="t" style="left:5.6px;top:4px;color:#ffffff;font-size:11px;letter-spacing:0.884px;">0000000000000000000000000000000000000000000000000000000000000000</div></div>
<svg width="1" height="1" style="left:0;top:0;"><g transform="translate(78,133)"><path d="M0 0.5 H3.5 V11 H7 V0.5 H11 V8" stroke="#2a9aa8" stroke-width="1" fill="none"/><circle cx="12.2" cy="12" r="3.8" fill="url(#gBlueC)" stroke="#4a80c0" stroke-width="0.6"/><path d="M11 12 H13.4 M12.2 10.8 V13.2" stroke="#1a4a90" stroke-width="1"/></g><g transform="translate(78,153)"><path d="M0 1.5 H3.5 V13 H7 V1.5 H11 V9" stroke="#60c040" stroke-width="1" fill="none"/><circle cx="11" cy="11.2" r="4.2" fill="#303030" opacity="0.6"/><circle cx="11" cy="11.2" r="3.4" fill="url(#gCoin)"/><path d="M9.7 9.2 V11.7 L11 13.2 L12.3 11.7 V9.2" stroke="#5a4a20" stroke-width="0.8" fill="none"/></g><g transform="translate(78,173)"><path d="M0 1.5 H3.5 V13 H7 V1.5 H11 V9" stroke="#60c040" stroke-width="1" fill="none"/><circle cx="11" cy="11.2" r="4.2" fill="#303030" opacity="0.6"/><circle cx="11" cy="11.2" r="3.4" fill="url(#gCoin)"/><path d="M9.7 9.2 V11.7 L11 13.2 L12.3 11.7 V9.2" stroke="#5a4a20" stroke-width="0.8" fill="none"/></g><g transform="translate(78,193)"><path d="M0 1.5 H3.5 V13 H7 V1.5 H11 V9" stroke="#60c040" stroke-width="1" fill="none"/><circle cx="11" cy="11.2" r="4.2" fill="#303030" opacity="0.6"/><circle cx="11" cy="11.2" r="3.4" fill="url(#gCoin)"/><path d="M9.7 9.2 V11.7 L11 13.2 L12.3 11.7 V9.2" stroke="#5a4a20" stroke-width="0.8" fill="none"/></g><g transform="translate(78,215)"><path d="M0 0 H6 L8 2.5 L10 0 H16 V10.5 H0 Z" fill="url(#gBus)"/><circle cx="11" cy="9" r="4.2" fill="#303030" opacity="0.6"/><circle cx="11" cy="9" r="3.4" fill="url(#gCoin)"/><path d="M9.7 7 V9.5 L11 11 L12.3 9.5 V7" stroke="#5a4a20" stroke-width="0.8" fill="none"/></g><path d="M60 217 H71 L65.5 226 Z" fill="#d8d8d8"/><g transform="translate(98,235)"><path d="M0 0 H6 L8 2.5 L10 0 H16 V10.5 H0 Z" fill="url(#gBus)"/><circle cx="11" cy="9" r="4.2" fill="#303030" opacity="0.6"/><circle cx="11" cy="9" r="3.4" fill="url(#gCoin)"/><path d="M9.7 7 V9.5 L11 11 L12.3 9.5 V7" stroke="#5a4a20" stroke-width="0.8" fill="none"/></g><path d="M80 237 V248 L89 242.5 Z" fill="#d8d8d8"/><g transform="translate(98,255)"><path d="M0 0 H6 L8 2.5 L10 0 H16 V10.5 H0 Z" fill="url(#gBus)"/><circle cx="11" cy="9" r="4.2" fill="#303030" opacity="0.6"/><circle cx="11" cy="9" r="3.4" fill="url(#gCoin)"/><path d="M9.7 7 V9.5 L11 11 L12.3 9.5 V7" stroke="#5a4a20" stroke-width="0.8" fill="none"/></g><path d="M80 257 V268 L89 262.5 Z" fill="#d8d8d8"/><g transform="translate(98,275)"><path d="M0 0 H6 L8 2.5 L10 0 H16 V10.5 H0 Z" fill="url(#gBus)"/><circle cx="11" cy="9" r="4.2" fill="#303030" opacity="0.6"/><circle cx="11" cy="9" r="3.4" fill="url(#gCoin)"/><path d="M9.7 7 V9.5 L11 11 L12.3 9.5 V7" stroke="#5a4a20" stroke-width="0.8" fill="none"/></g><path d="M80 277 V288 L89 282.5 Z" fill="#d8d8d8"/><g transform="translate(98,295)"><path d="M0 0 H6 L8 2.5 L10 0 H16 V10.5 H0 Z" fill="url(#gBus)"/><circle cx="11" cy="9" r="4.2" fill="#303030" opacity="0.6"/><circle cx="11" cy="9" r="3.4" fill="url(#gCoin)"/><path d="M9.7 7 V9.5 L11 11 L12.3 9.5 V7" stroke="#5a4a20" stroke-width="0.8" fill="none"/></g><path d="M80 297 V308 L89 302.5 Z" fill="#d8d8d8"/><g transform="translate(98,315)"><path d="M0 0 H6 L8 2.5 L10 0 H16 V10.5 H0 Z" fill="url(#gBus)"/><circle cx="11" cy="9" r="4.2" fill="#303030" opacity="0.6"/><circle cx="11" cy="9" r="3.4" fill="url(#gCoin)"/><path d="M9.7 7 V9.5 L11 11 L12.3 9.5 V7" stroke="#5a4a20" stroke-width="0.8" fill="none"/></g><path d="M80 317 V328 L89 322.5 Z" fill="#d8d8d8"/><g transform="translate(98,335)"><path d="M0 0 H6 L8 2.5 L10 0 H16 V10.5 H0 Z" fill="url(#gBus)"/><circle cx="11" cy="9" r="4.2" fill="#303030" opacity="0.6"/><circle cx="11" cy="9" r="3.4" fill="url(#gCoin)"/><path d="M9.7 7 V9.5 L11 11 L12.3 9.5 V7" stroke="#5a4a20" stroke-width="0.8" fill="none"/></g><path d="M80 337 V348 L89 342.5 Z" fill="#d8d8d8"/><g transform="translate(98,355)"><path d="M0 0 H6 L8 2.5 L10 0 H16 V10.5 H0 Z" fill="url(#gBus)"/><circle cx="11" cy="9" r="4.2" fill="#303030" opacity="0.6"/><circle cx="11" cy="9" r="3.4" fill="url(#gCoin)"/><path d="M9.7 7 V9.5 L11 11 L12.3 9.5 V7" stroke="#5a4a20" stroke-width="0.8" fill="none"/></g><path d="M80 357 V368 L89 362.5 Z" fill="#d8d8d8"/><g transform="translate(98,375)"><path d="M0 0 H6 L8 2.5 L10 0 H16 V10.5 H0 Z" fill="url(#gBus)"/><circle cx="11" cy="9" r="4.2" fill="#303030" opacity="0.6"/><circle cx="11" cy="9" r="3.4" fill="url(#gCoin)"/><path d="M9.7 7 V9.5 L11 11 L12.3 9.5 V7" stroke="#5a4a20" stroke-width="0.8" fill="none"/></g><path d="M80 377 V388 L89 382.5 Z" fill="#d8d8d8"/><g transform="translate(98,395)"><path d="M0 0 H6 L8 2.5 L10 0 H16 V10.5 H0 Z" fill="url(#gBus)"/><circle cx="11" cy="9" r="4.2" fill="#303030" opacity="0.6"/><circle cx="11" cy="9" r="3.4" fill="url(#gCoin)"/><path d="M9.7 7 V9.5 L11 11 L12.3 9.5 V7" stroke="#5a4a20" stroke-width="0.8" fill="none"/></g><path d="M80 397 V408 L89 402.5 Z" fill="#d8d8d8"/><g transform="translate(98,415)"><path d="M0 0 H6 L8 2.5 L10 0 H16 V10.5 H0 Z" fill="url(#gBus)"/><circle cx="11" cy="9" r="4.2" fill="#303030" opacity="0.6"/><circle cx="11" cy="9" r="3.4" fill="url(#gCoin)"/><path d="M9.7 7 V9.5 L11 11 L12.3 9.5 V7" stroke="#5a4a20" stroke-width="0.8" fill="none"/></g><path d="M80 417 V428 L89 422.5 Z" fill="#d8d8d8"/><g transform="translate(98,435)"><path d="M0 0 H6 L8 2.5 L10 0 H16 V10.5 H0 Z" fill="url(#gBus)"/><circle cx="11" cy="9" r="4.2" fill="#303030" opacity="0.6"/><circle cx="11" cy="9" r="3.4" fill="url(#gCoin)"/><path d="M9.7 7 V9.5 L11 11 L12.3 9.5 V7" stroke="#5a4a20" stroke-width="0.8" fill="none"/></g><path d="M80 437 V448 L89 442.5 Z" fill="#d8d8d8"/><g transform="translate(98,455)"><path d="M0 0 H6 L8 2.5 L10 0 H16 V10.5 H0 Z" fill="url(#gBus)"/><circle cx="11" cy="9" r="4.2" fill="#303030" opacity="0.6"/><circle cx="11" cy="9" r="3.4" fill="url(#gCoin)"/><path d="M9.7 7 V9.5 L11 11 L12.3 9.5 V7" stroke="#5a4a20" stroke-width="0.8" fill="none"/></g><path d="M80 457 V468 L89 462.5 Z" fill="#d8d8d8"/><g transform="translate(98,475)"><path d="M0 0 H6 L8 2.5 L10 0 H16 V10.5 H0 Z" fill="url(#gBus)"/><circle cx="11" cy="9" r="4.2" fill="#303030" opacity="0.6"/><circle cx="11" cy="9" r="3.4" fill="url(#gCoin)"/><path d="M9.7 7 V9.5 L11 11 L12.3 9.5 V7" stroke="#5a4a20" stroke-width="0.8" fill="none"/></g><path d="M80 477 V488 L89 482.5 Z" fill="#d8d8d8"/><g transform="translate(98,495)"><path d="M0 0 H6 L8 2.5 L10 0 H16 V10.5 H0 Z" fill="url(#gBus)"/><circle cx="11" cy="9" r="4.2" fill="#303030" opacity="0.6"/><circle cx="11" cy="9" r="3.4" fill="url(#gCoin)"/><path d="M9.7 7 V9.5 L11 11 L12.3 9.5 V7" stroke="#5a4a20" stroke-width="0.8" fill="none"/></g><path d="M80 497 V508 L89 502.5 Z" fill="#d8d8d8"/><g transform="translate(98,515)"><path d="M0 0 H6 L8 2.5 L10 0 H16 V10.5 H0 Z" fill="url(#gBus)"/><circle cx="11" cy="9" r="4.2" fill="#303030" opacity="0.6"/><circle cx="11" cy="9" r="3.4" fill="url(#gCoin)"/><path d="M9.7 7 V9.5 L11 11 L12.3 9.5 V7" stroke="#5a4a20" stroke-width="0.8" fill="none"/></g><path d="M80 517 V528 L89 522.5 Z" fill="#d8d8d8"/><g transform="translate(98,535)"><path d="M0 0 H6 L8 2.5 L10 0 H16 V10.5 H0 Z" fill="url(#gBus)"/><circle cx="11" cy="9" r="4.2" fill="#303030" opacity="0.6"/><circle cx="11" cy="9" r="3.4" fill="url(#gCoin)"/><path d="M9.7 7 V9.5 L11 11 L12.3 9.5 V7" stroke="#5a4a20" stroke-width="0.8" fill="none"/></g><path d="M80 537 V548 L89 542.5 Z" fill="#d8d8d8"/></svg>
<div style="position:absolute;left:569px;top:74px;width:48px;height:15px;border:1px solid #ffff00;"></div>
<div class="t" style="left:571px;top:75px;color:#ffff00;font-size:11px;line-height:13px;letter-spacing:-0.1px;">0.000 ns</div>
<div style="position:absolute;left:571px;top:130px;width:689px;height:1px;background:#ffffff;"></div>
<div style="position:absolute;left:590px;top:126px;width:1px;height:4px;background:#ffffff;"></div>
<div style="position:absolute;left:610px;top:126px;width:1px;height:4px;background:#ffffff;"></div>
<div style="position:absolute;left:630px;top:126px;width:1px;height:4px;background:#ffffff;"></div>
<div style="position:absolute;left:650px;top:126px;width:1px;height:4px;background:#ffffff;"></div>
<div style="position:absolute;left:690px;top:126px;width:1px;height:4px;background:#ffffff;"></div>
<div style="position:absolute;left:710px;top:126px;width:1px;height:4px;background:#ffffff;"></div>
<div style="position:absolute;left:730px;top:126px;width:1px;height:4px;background:#ffffff;"></div>
<div style="position:absolute;left:750px;top:126px;width:1px;height:4px;background:#ffffff;"></div>
<div style="position:absolute;left:790px;top:126px;width:1px;height:4px;background:#ffffff;"></div>
<div style="position:absolute;left:810px;top:126px;width:1px;height:4px;background:#ffffff;"></div>
<div style="position:absolute;left:830px;top:126px;width:1px;height:4px;background:#ffffff;"></div>
<div style="position:absolute;left:850px;top:126px;width:1px;height:4px;background:#ffffff;"></div>
<div style="position:absolute;left:890px;top:126px;width:1px;height:4px;background:#ffffff;"></div>
<div style="position:absolute;left:910px;top:126px;width:1px;height:4px;background:#ffffff;"></div>
<div style="position:absolute;left:930px;top:126px;width:1px;height:4px;background:#ffffff;"></div>
<div style="position:absolute;left:950px;top:126px;width:1px;height:4px;background:#ffffff;"></div>
<div style="position:absolute;left:990px;top:126px;width:1px;height:4px;background:#ffffff;"></div>
<div style="position:absolute;left:1010px;top:126px;width:1px;height:4px;background:#ffffff;"></div>
<div style="position:absolute;left:1030px;top:126px;width:1px;height:4px;background:#ffffff;"></div>
<div style="position:absolute;left:1050px;top:126px;width:1px;height:4px;background:#ffffff;"></div>
<div style="position:absolute;left:1090px;top:126px;width:1px;height:4px;background:#ffffff;"></div>
<div style="position:absolute;left:1110px;top:126px;width:1px;height:4px;background:#ffffff;"></div>
<div style="position:absolute;left:1130px;top:126px;width:1px;height:4px;background:#ffffff;"></div>
<div style="position:absolute;left:1150px;top:126px;width:1px;height:4px;background:#ffffff;"></div>
<div style="position:absolute;left:1190px;top:126px;width:1px;height:4px;background:#ffffff;"></div>
<div style="position:absolute;left:1210px;top:126px;width:1px;height:4px;background:#ffffff;"></div>
<div style="position:absolute;left:1230px;top:126px;width:1px;height:4px;background:#ffffff;"></div>
<div style="position:absolute;left:1250px;top:126px;width:1px;height:4px;background:#ffffff;"></div>
<div class="t" style="left:572px;top:112px;color:#ffffff;font-size:11px;line-height:13px;letter-spacing:-0.3px;">0 ns</div>
<div class="t" style="left:672px;top:112px;color:#ffffff;font-size:11px;line-height:13px;letter-spacing:-0.3px;">5 ns</div>
<div class="t" style="left:772px;top:112px;color:#ffffff;font-size:11px;line-height:13px;letter-spacing:-0.3px;">10 ns</div>
<div class="t" style="left:872px;top:112px;color:#ffffff;font-size:11px;line-height:13px;letter-spacing:-0.3px;">15 ns</div>
<div class="t" style="left:972px;top:112px;color:#ffffff;font-size:11px;line-height:13px;letter-spacing:-0.3px;">20 ns</div>
<div class="t" style="left:1072px;top:112px;color:#ffffff;font-size:11px;line-height:13px;letter-spacing:-0.3px;">25 ns</div>
<div class="t" style="left:1172px;top:112px;color:#ffffff;font-size:11px;line-height:13px;letter-spacing:-0.3px;">30 ns</div>
<div style="position:absolute;left:569px;top:623px;width:692px;height:1px;background:#e0e0e0;"></div>
<div class="t" style="left:575px;top:643px;color:#ffffff;font-size:11px;line-height:13px;">X1: 0.000 ns</div>
<svg width="1280" height="800" style="left:0;top:0;" shape-rendering="crispEdges"><rect x="571" y="135" width="199" height="14" fill="#003f00"/><rect x="571" y="133" width="199" height="2" fill="#00ff00"/><rect x="769" y="133" width="1" height="16" fill="#00ff00"/><rect x="771" y="147" width="488" height="2" fill="#00ff00"/><rect x="571" y="168" width="199" height="1" fill="#00ff00"/><rect x="770" y="155" width="200" height="14" fill="#003f00"/><rect x="770" y="154" width="200" height="1" fill="#00ff00"/><rect x="970" y="168" width="200" height="1" fill="#00ff00"/><rect x="1170" y="155" width="89" height="14" fill="#003f00"/><rect x="1170" y="154" width="89" height="1" fill="#00ff00"/><rect x="571" y="188" width="688" height="1" fill="#00ff00"/><rect x="571" y="208" width="688" height="1" fill="#00ff00"/><polyline points="1259,214.5 574.5,214.5 571.5,221 574.5,228.5 1259,228.5" fill="none" stroke="#00ff00" stroke-width="1"/><polyline points="1259,234.5 574.5,234.5 571.5,241 574.5,248.5 1259,248.5" fill="none" stroke="#00ff00" stroke-width="1"/><polyline points="1259,254.5 574.5,254.5 571.5,261 574.5,268.5 1259,268.5" fill="none" stroke="#00ff00" stroke-width="1"/><polyline points="1259,274.5 574.5,274.5 571.5,281 574.5,288.5 1259,288.5" fill="none" stroke="#00ff00" stroke-width="1"/><polyline points="1259,294.5 574.5,294.5 571.5,301 574.5,308.5 1259,308.5" fill="none" stroke="#00ff00" stroke-width="1"/><polyline points="1259,314.5 574.5,314.5 571.5,321 574.5,328.5 1259,328.5" fill="none" stroke="#00ff00" stroke-width="1"/><polyline points="1259,334.5 574.5,334.5 571.5,341 574.5,348.5 1259,348.5" fill="none" stroke="#00ff00" stroke-width="1"/><polyline points="1259,354.5 574.5,354.5 571.5,361 574.5,368.5 1259,368.5" fill="none" stroke="#00ff00" stroke-width="1"/><polyline points="1259,374.5 574.5,374.5 571.5,381 574.5,388.5 1259,388.5" fill="none" stroke="#00ff00" stroke-width="1"/><polyline points="1259,394.5 574.5,394.5 571.5,401 574.5,408.5 1259,408.5" fill="none" stroke="#00ff00" stroke-width="1"/><polyline points="1259,414.5 574.5,414.5 571.5,421 574.5,428.5 1259,428.5" fill="none" stroke="#00ff00" stroke-width="1"/><polyline points="1259,434.5 574.5,434.5 571.5,441 574.5,448.5 1259,448.5" fill="none" stroke="#00ff00" stroke-width="1"/><polyline points="1259,454.5 574.5,454.5 571.5,461 574.5,468.5 1259,468.5" fill="none" stroke="#00ff00" stroke-width="1"/><polyline points="1259,474.5 574.5,474.5 571.5,481 574.5,488.5 1259,488.5" fill="none" stroke="#00ff00" stroke-width="1"/><polyline points="1259,494.5 574.5,494.5 571.5,501 574.5,508.5 1259,508.5" fill="none" stroke="#00ff00" stroke-width="1"/><polyline points="1259,514.5 574.5,514.5 571.5,521 574.5,528.5 1259,528.5" fill="none" stroke="#00ff00" stroke-width="1"/><polyline points="1259,534.5 574.5,534.5 571.5,541 574.5,548.5 1259,548.5" fill="none" stroke="#00ff00" stroke-width="1"/></svg>
<div style="position:absolute;left:670px;top:114px;width:1px;height:509px;background:#c8c8c8;"></div>
<div style="position:absolute;left:670px;top:114px;width:1px;height:16px;background:#f0f0f0;"></div>
<div style="position:absolute;left:770px;top:114px;width:1px;height:509px;background:#c8c8c8;"></div>
<div style="position:absolute;left:770px;top:114px;width:1px;height:16px;background:#f0f0f0;"></div>
<div style="position:absolute;left:870px;top:114px;width:1px;height:509px;background:#c8c8c8;"></div>
<div style="position:absolute;left:870px;top:114px;width:1px;height:16px;background:#f0f0f0;"></div>
<div style="position:absolute;left:970px;top:114px;width:1px;height:509px;background:#c8c8c8;"></div>
<div style="position:absolute;left:970px;top:114px;width:1px;height:16px;background:#f0f0f0;"></div>
<div style="position:absolute;left:1070px;top:114px;width:1px;height:509px;background:#c8c8c8;"></div>
<div style="position:absolute;left:1070px;top:114px;width:1px;height:16px;background:#f0f0f0;"></div>
<div style="position:absolute;left:1170px;top:114px;width:1px;height:509px;background:#c8c8c8;"></div>
<div style="position:absolute;left:1170px;top:114px;width:1px;height:16px;background:#f0f0f0;"></div>
<div style="position:absolute;left:569px;top:90px;width:2px;height:533px;background:#ffff00;"></div>
<div class="t" style="left:576.2px;top:214px;color:#ffffff;font-size:11px;letter-spacing:-0.116px;"><span style="letter-spacing:0.94px">[</span>0000000000000000000000000000000000000000000000000000000000000000<span style="letter-spacing:0.94px">,</span>0000010000000000000000000000000000000000000000<span style="letter-spacing:-0.06px">...</span></div>
<div class="t" style="left:722px;top:234px;color:#ffffff;font-size:11px;letter-spacing:-0.116px;">0000000000000000000000000000000000000000000000000000000000000000</div>
<div class="t" style="left:722px;top:254px;color:#ffffff;font-size:11px;letter-spacing:-0.116px;">0000010000000000000000000000000000000000000000000000000000000000</div>
<div class="t" style="left:722px;top:274px;color:#ffffff;font-size:11px;letter-spacing:-0.116px;">0000001000000000000000000000000000000000000000000000000000000000</div>
<div class="t" style="left:722px;top:294px;color:#ffffff;font-size:11px;letter-spacing:-0.116px;">0000111000000000000000000000000000000000000000000000000000000000</div>
<div class="t" style="left:722px;top:314px;color:#ffffff;font-size:11px;letter-spacing:-0.116px;">0000000000000000000000000000000000000000000000000000000000000000</div>
<div class="t" style="left:722px;top:334px;color:#ffffff;font-size:11px;letter-spacing:-0.116px;">0000000000000000000000000000000000000000000000000000000000000000</div>
<div class="t" style="left:722px;top:354px;color:#ffffff;font-size:11px;letter-spacing:-0.116px;">0000000000000000000000000000000000000000000000000000000000000000</div>
<div class="t" style="left:722px;top:374px;color:#ffffff;font-size:11px;letter-spacing:-0.116px;">0000000000000000000000000000000000000000000000000000000000000000</div>
<div class="t" style="left:722px;top:394px;color:#ffffff;font-size:11px;letter-spacing:-0.116px;">0000000000000000000000000000000000000000000000000000000000000000</div>
<div class="t" style="left:722px;top:414px;color:#ffffff;font-size:11px;letter-spacing:-0.116px;">0000000000000000000000000000000000000000000000000000000000000000</div>
<div class="t" style="left:722px;top:434px;color:#ffffff;font-size:11px;letter-spacing:-0.116px;">0000000000000000000000000000000000000000000000000000000000000000</div>
<div class="t" style="left:722px;top:454px;color:#ffffff;font-size:11px;letter-spacing:-0.116px;">0000000000000000000000000000000000000000000000000000000000000000</div>
<div class="t" style="left:722px;top:474px;color:#ffffff;font-size:11px;letter-spacing:-0.116px;">0000000000000000000000000000000000000000000000000000000000000000</div>
<div class="t" style="left:722px;top:494px;color:#ffffff;font-size:11px;letter-spacing:-0.116px;">0000000000000000000000000000000000000000000000000000000000000000</div>
<div class="t" style="left:722px;top:514px;color:#ffffff;font-size:11px;letter-spacing:-0.116px;">0000000000000000000000000000000000000000000000000000000000000000</div>
<div class="t" style="left:722px;top:534px;color:#ffffff;font-size:11px;letter-spacing:-0.116px;">0000000000000000000000000000000000000000000000000000000000000000</div>
<div style="position:absolute;left:53px;top:664px;width:1210px;height:17px;background:#f0f0f0;"></div>
<div style="position:absolute;left:54px;top:664px;width:143px;height:17px;background:linear-gradient(#e6e6e6,#f2f2f2 30%,#ededed);"></div>
<div style="position:absolute;left:201px;top:664px;width:362px;height:17px;background:linear-gradient(#e6e6e6,#f2f2f2 30%,#ededed);"></div>
<div style="position:absolute;left:567px;top:664px;width:695px;height:17px;background:linear-gradient(#e6e6e6,#f2f2f2 30%,#ededed);"></div>
<svg width="1" height="1" style="left:0;top:0;"><polygon points="63,668 59,672 63,676" fill="#a0a0a0"/></svg>
<svg width="1" height="1" style="left:0;top:0;"><polygon points="187,668 191,672 187,676" fill="#a0a0a0"/></svg>
<svg width="1" height="1" style="left:0;top:0;"><polygon points="210,668 206,672 210,676" fill="#505050"/></svg>
<svg width="1" height="1" style="left:0;top:0;"><polygon points="553,668 557,672 553,676" fill="#505050"/></svg>
<svg width="1" height="1" style="left:0;top:0;"><polygon points="576,668 572,672 576,676" fill="#505050"/></svg>
<svg width="1" height="1" style="left:0;top:0;"><polygon points="1251,668 1255,672 1251,676" fill="#505050"/></svg>
<div style="position:absolute;left:218px;top:665px;width:14px;height:15px;background:linear-gradient(#f4f4f4,#d8d8d8);border:1px solid #9a9a9a;border-radius:2px;"></div>
<div style="position:absolute;left:584px;top:665px;width:9px;height:15px;background:linear-gradient(#f4f4f4,#d8d8d8);border:1px solid #9a9a9a;border-radius:2px;"></div>
<div style="position:absolute;left:1262px;top:74px;width:18px;height:607px;background:linear-gradient(90deg,#e6e6e6,#f2f2f2 30%,#ededed);"></div>
<svg width="1" height="1" style="left:0;top:0;"><polygon points="1268.5,84 1272.5,80 1276.5,84" fill="#808080"/></svg>
<svg width="1" height="1" style="left:0;top:0;"><polygon points="1268.5,668 1272.5,672 1276.5,668" fill="#808080"/></svg>
<div style="position:absolute;left:53px;top:681px;width:1227px;height:1px;background:#f0f0f0;"></div>
<div style="position:absolute;left:27px;top:681px;width:626px;height:22px;background:linear-gradient(#fbfbfb,#eef0f3);border-right:1px solid #c0c0c0;"></div>
<div style="position:absolute;left:27px;top:702px;width:626px;height:3px;background:#3d8ce0;"></div>
<div style="position:absolute;left:653px;top:682px;width:627px;height:1px;background:#b8b8b8;"></div>
<div style="position:absolute;left:653px;top:683px;width:627px;height:22px;background:#f0f0f0;"></div>
<div class="t" style="left:304px;top:685px;font-size:12px;color:#000;">Default.wcfg*</div>
<div style="position:absolute;left:631px;top:686px;width:15px;height:14px;background:linear-gradient(#f08a6a,#d64a2a);border:1px solid #b03a20;border-radius:2px;"></div>
<svg width="1" height="1" style="left:0;top:0;"><path d="M635 689.5 L642 696.5 M642 689.5 L635 696.5" stroke="#fff" stroke-width="2"/></svg>
<div style="position:absolute;left:32px;top:684px;width:16px;height:16px;background:#fff;border:1px solid #5a8ad0;border-top:3px solid #2c68c8;"></div>
<svg width="1" height="1" style="left:0;top:0;"><path d="M34 692.5 H35.5 V690.5 H38.5 V692.5 H40.5 V690.5 H43.5 V692.5 H45.5 V690.5 M34 696.5 H35.5 V694.5 H39.5 V696.5 H41.5 V694.5 H44.5 V696.5 H46" stroke="#3a70e0" stroke-width="1" fill="none" shape-rendering="crispEdges"/></svg>
<div style="position:absolute;left:0px;top:705px;width:1280px;height:25px;background:#f0f0f0;"></div>
<div style="position:absolute;left:0px;top:705px;width:1280px;height:1px;background:#ffffff;"></div>
<div style="position:absolute;left:0px;top:730px;width:1280px;height:1px;background:#a0a0a0;"></div>
<div style="position:absolute;left:1278px;top:705px;width:1px;height:25px;background:#a0a0a0;"></div>
<svg width="1" height="1" style="left:0;top:0;"><rect x="8.5" y="711.5" width="15" height="12" fill="#8ab8ee" stroke="#6a9ad8"/><rect x="10" y="713" width="12" height="9" fill="#3a3a3e"/><path d="M11 714.5 L13 715.5 L11 716.5 M13.5 716.5 H16" stroke="#fff" stroke-width="0.9" fill="none"/><rect x="79.5" y="711.5" width="15" height="12" fill="#8ab8ee" stroke="#6a9ad8"/><rect x="81" y="713" width="12" height="9" fill="#3a3a3e"/><path d="M82 714.5 L84 715.5 L82 716.5 M84.5 716.5 H87" stroke="#fff" stroke-width="0.9" fill="none"/><defs><radialGradient id="rb" cx="0.4" cy="0.35" r="0.7"><stop offset="0" stop-color="#ff4a3a"/><stop offset="1" stop-color="#a80000"/></radialGradient></defs><circle cx="157.8" cy="718" r="5.2" fill="url(#rb)"/><g transform="translate(240,711)"><path d="M0.5 0.5 H5 L6 2 H13.5 V10.5 H0.5 Z" fill="#f8e050" stroke="#c0a020"/><path d="M4 6 H7 L7.5 9 H8.5 L9 6 H12 L14 14 H10 L9.5 12 H7.5 L7 14 H3 Z" fill="#303030"/><path d="M4.5 8 H6.5 M10 8 H12" stroke="#d0d0d0"/></g><g transform="translate(365,711)"><rect x="0.5" y="0.5" width="14" height="13" fill="#f4f8ff" stroke="#6a9ad8"/><rect x="1" y="1" width="13" height="2" fill="#9ac0ee"/><path d="M2.5 5.5 H12.5 M2.5 8.5 H8" stroke="#9ab0cc"/><path d="M7 8 H10 L10.5 11 H11.5 L12 8 H15 L16.5 15 H12.5 L12 13.5 H10 L9.5 15 H5.5 Z" fill="#303030"/></g></svg>
<div class="t" style="left:29px;top:711px;font-size:11px;letter-spacing:-0.229px;">Console</div>
<div class="t" style="left:100.5px;top:711px;font-size:11px;letter-spacing:-0.229px;">Console</div>
<div class="t" style="left:170.5px;top:711px;font-size:11px;letter-spacing:-0.013px;">Breakpoints</div>
<div class="t" style="left:259.5px;top:711px;font-size:11px;letter-spacing:-0.228px;">Find in Files Results</div>
<div class="t" style="left:385.5px;top:711px;font-size:11px;letter-spacing:-0.163px;">Search Results</div>
<div style="position:absolute;left:0px;top:731px;width:1280px;height:28px;background:#f0f0f0;"></div>
<div style="position:absolute;left:1132px;top:734px;width:146px;height:24px;border:1px solid #c8c8c8;border-right-color:#fff;border-bottom-color:#fff;background:#f0f0f0;"></div>
<div class="t" style="left:1135.5px;top:740px;font-size:11px;letter-spacing:0.177px;">Sim Time: 1,001,000,000 ps</div>
<div style="position:absolute;left:0px;top:759px;width:1280px;height:1px;background:#ffffff;"></div>
<div style="position:absolute;left:0px;top:760px;width:1280px;height:40px;background:linear-gradient(90deg,#8b9fb8 0px,#8ea3bb 58px,#a6bfdb 59px,#a6bfdb 1060px,#8d9fb6 1095px,#8a9cb4 1280px);"></div>
<div style="position:absolute;left:0px;top:760px;width:1280px;height:1px;background:#3a4450;"></div>
<div style="position:absolute;left:59px;top:761px;width:1003px;height:1px;background:#c0d4e8;"></div>
<svg width="1" height="1" style="left:0;top:0;"><defs><linearGradient id="tbb" x1="0" y1="0" x2="0.3" y2="1"><stop offset="0" stop-color="#e0eaf4"/><stop offset="1" stop-color="#a8bed6"/></linearGradient><linearGradient id="tba" x1="0" y1="0" x2="0.3" y2="1"><stop offset="0" stop-color="#f0f5fb"/><stop offset="1" stop-color="#c0d2e6"/></linearGradient><radialGradient id="orb" cx="0.5" cy="0.3" r="0.75"><stop offset="0" stop-color="#c8dcec"/><stop offset="0.45" stop-color="#3a7ab8"/><stop offset="0.8" stop-color="#0a3a78"/><stop offset="1" stop-color="#20c0f0"/></radialGradient><radialGradient id="ffg" cx="0.55" cy="0.4" r="0.5"><stop offset="0" stop-color="#a0e0ff"/><stop offset="1" stop-color="#1a4aa0"/></radialGradient><linearGradient id="ffo" x1="0" y1="0" x2="1" y2="1"><stop offset="0" stop-color="#f8a020"/><stop offset="1" stop-color="#c02000"/></linearGradient></defs><rect x="60.5" y="760.5" width="58" height="39" rx="3" fill="url(#tbb)" stroke="#2a3440"/><rect x="61.5" y="761.5" width="56" height="37" rx="2" fill="none" stroke="#ffffff" stroke-opacity="0.6"/><rect x="183.5" y="760.5" width="58" height="39" rx="3" fill="url(#tbb)" stroke="#2a3440"/><rect x="184.5" y="761.5" width="56" height="37" rx="2" fill="none" stroke="#ffffff" stroke-opacity="0.6"/><rect x="245.5" y="760.5" width="58" height="39" rx="3" fill="url(#tbb)" stroke="#2a3440"/><rect x="246.5" y="761.5" width="56" height="37" rx="2" fill="none" stroke="#ffffff" stroke-opacity="0.6"/><rect x="307.5" y="760.5" width="58" height="39" rx="3" fill="url(#tba)" stroke="#2a3440"/><rect x="308.5" y="761.5" width="56" height="37" rx="2" fill="none" stroke="#ffffff" stroke-opacity="0.6"/><circle cx="27" cy="780" r="18" fill="url(#orb)" stroke="#1a3a60" stroke-width="1"/><ellipse cx="27" cy="772" rx="15" ry="9" fill="#ffffff" opacity="0.35"/><ellipse cx="27" cy="794" rx="10" ry="3" fill="#40e0ff" opacity="0.5"/><path d="M18 771 Q22 769 26 771 L25 778 Q21 776 17 778 Z" fill="#f05020"/><path d="M28 771.5 Q32 773 36 771 L35 778.5 Q31 780 27 778.5 Z" fill="#80c040"/><path d="M17 779.5 Q21 777.5 25 779.5 L24 786.5 Q20 784.5 16 786.5 Z" fill="#30a0e8"/><path d="M27 780 Q31 781.5 35 779.5 L34 787 Q30 788.5 26 787 Z" fill="#f8c020"/><path d="M74.5 770.5 H86 L88 772.5 H104.5 V793.5 H74.5 Z" fill="#f0d890" stroke="#c8a850"/><rect x="75" y="775" width="29" height="18" fill="#f8e8a8"/><rect x="77" y="768" width="3" height="2" fill="#20c020"/><rect x="85" y="770" width="3" height="2" fill="#e02020"/><rect x="94" y="773" width="3" height="2" fill="#2090e0"/><path d="M78 796 V784 H101 V796 H96 V789 H83 V796 Z" fill="#a8d8f0" stroke="#50a0d0"/><circle cx="151.5" cy="779.5" r="15" fill="url(#ffo)"/><circle cx="154" cy="776" r="10" fill="url(#ffg)"/><path d="M137 774 Q140 766 146 766 Q143 770 146 773 Q150 772 152 776 Q147 779 150 784 Q156 788 164 782 Q162 792 150 794 Q138 792 137 780 Z" fill="#e86010"/><rect x="201.5" y="765.5" width="22" height="29" rx="2" fill="#c8e0f4" stroke="#5a9ad0"/><rect x="203.5" y="768.5" width="18" height="8" fill="#f0f8ff" stroke="#5a8ab8"/><rect x="204" y="768" width="17" height="1.5" fill="#f0a020"/><text x="215" y="775.5" font-size="7" fill="#304060" font-family="Liberation Sans">0</text><rect x="204" y="780" width="2" height="2" fill="#3a8ac0"/><rect x="204" y="783" width="2" height="2" fill="#f4f8ff"/><rect x="204" y="786" width="2" height="2" fill="#f4f8ff"/><rect x="204" y="789" width="2" height="2" fill="#f4f8ff"/><rect x="207" y="780" width="2" height="2" fill="#3a8ac0"/><rect x="207" y="783" width="2" height="2" fill="#f4f8ff"/><rect x="207" y="786" width="2" height="2" fill="#f4f8ff"/><rect x="207" y="789" width="2" height="2" fill="#f4f8ff"/><rect x="210" y="780" width="2" height="2" fill="#3a8ac0"/><rect x="210" y="783" width="2" height="2" fill="#f4f8ff"/><rect x="210" y="786" width="2" height="2" fill="#f4f8ff"/><rect x="210" y="789" width="2" height="2" fill="#f4f8ff"/><rect x="213" y="780" width="2" height="2" fill="#3a8ac0"/><rect x="213" y="783" width="2" height="2" fill="#3a8ac0"/><rect x="213" y="786" width="2" height="2" fill="#3a8ac0"/><rect x="213" y="789" width="2" height="2" fill="#3a8ac0"/><rect x="216" y="780" width="2" height="2" fill="#3a8ac0"/><rect x="216" y="783" width="2" height="2" fill="#3a8ac0"/><rect x="216" y="786" width="2" height="2" fill="#3a8ac0"/><rect x="216" y="789" width="2" height="2" fill="#3a8ac0"/><rect x="219" y="780" width="2" height="2" fill="#3a8ac0"/><rect x="219" y="783" width="2" height="2" fill="#3a8ac0"/><rect x="219" y="786" width="2" height="2" fill="#3a8ac0"/><rect x="219" y="789" width="2" height="2" fill="#3a8ac0"/><rect x="219" y="786" width="2" height="5" fill="#f0a020"/><path d="M260 768 H276 L291 780 H275 Z" fill="#d8d838"/><path d="M275 780 H291 L276 792 H260 Z" fill="#a8a800"/><defs><linearGradient id="isg" x1="0" y1="1" x2="1" y2="0"><stop offset="0" stop-color="#2a6ad0"/><stop offset="0.6" stop-color="#7ab0ec"/><stop offset="1" stop-color="#e0f0ff"/></linearGradient></defs><rect x="322" y="765" width="29.5" height="22" fill="url(#isg)"/><path d="M323 783 H333 V778 H342 V772 H350" stroke="#d8ecff" stroke-width="2" fill="none" opacity="0.9"/><path d="M323 771 H330 V774 H338" stroke="#c0dcff" stroke-width="1.5" fill="none" opacity="0.7"/><circle cx="345.2" cy="785" r="7" fill="#e8f0f8" stroke="#606060" stroke-width="1.5"/><ellipse cx="345.2" cy="785" rx="2" ry="3" fill="#303030"/><path d="M341 781 L349.5 789 M349.5 781 L341 789 M340.5 785 H350" stroke="#404040" stroke-width="0.7"/><path d="M349 790 L352 794" stroke="#e02020" stroke-width="2"/><text x="322" y="795.5" font-size="8.5" font-weight="bold" fill="#0a1a5a" font-family="Liberation Sans" letter-spacing="0.6">ISIm</text><path d="M1102 785 L1106 781 L1110 785 Z" fill="#fff"/><path d="M1124.5 772 V790" stroke="#fff" stroke-width="1.6"/><path d="M1125 773 H1132 L1134 775 H1139 L1137 778 L1139 781 H1133 L1131 779 H1125 Z" fill="#fff"/><rect x="1152.5" y="775.5" width="10" height="8" fill="#4a5a6a" stroke="#fff"/><path d="M1155 786 H1160 M1157.5 783 V786" stroke="#fff"/><path d="M1149 772 V783 M1147.5 772 H1150.5 V776 H1147.5 Z" stroke="#fff" fill="none"/><path d="M1172 777 H1175 L1179 773 V787 L1175 783 H1172 Z" fill="#fff"/><path d="M1181 776 Q1183 780 1181 784 M1183.5 774 Q1186.5 780 1183.5 786" stroke="#fff" stroke-width="1.2" fill="none"/></svg>
<div style="position:absolute;left:1265px;top:761px;width:15px;height:39px;background:linear-gradient(90deg,#8a9cb2,#a4b4c8 50%,#8ea0b6);border:1px solid #c4d0dc;border-left-color:#3a4654;"></div>
<div class="t" style="left:1209px;top:766px;font-size:12px;letter-spacing:-0.445px;color:#fff;">6:28 PM</div>
<div class="t" style="left:1201px;top:782px;font-size:12px;letter-spacing:-0.127px;color:#fff;">11/19/2012</div>
</body></html>
